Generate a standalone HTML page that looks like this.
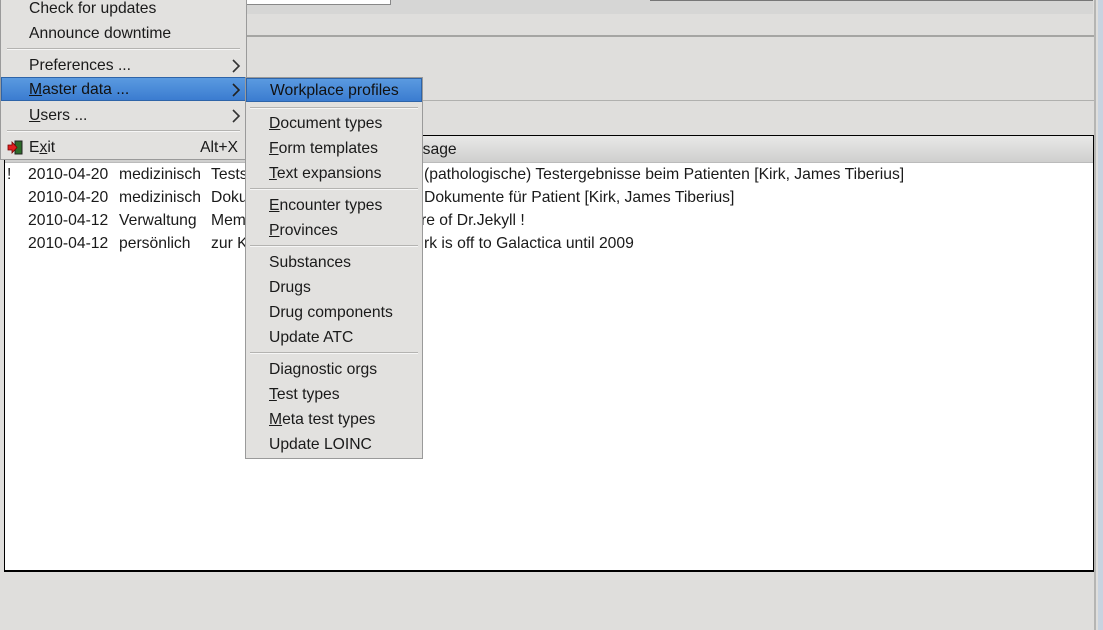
<!DOCTYPE html>
<html><head><meta charset="utf-8"><style>
*{margin:0;padding:0;box-sizing:border-box}
body{width:1103px;height:630px;overflow:hidden;background:#dfdedc;font-family:"Liberation Sans",sans-serif;font-size:15.7px;color:#1a1a1a;position:relative}
.a{position:absolute;white-space:nowrap}
u{text-decoration:underline}
.menu{position:absolute;background:#e2e1df;border:1px solid #9a9a9a}
.it{position:absolute;left:0;right:0;height:24px;line-height:25px}
.hl{background:linear-gradient(#5a9ae0,#3b7cd0);border:1px solid #2e64a8;color:#111;line-height:23px}
.sep{position:absolute;height:2px;border-top:1px solid #b4b3b1;border-bottom:1px solid #f6f6f6}
.arr{position:absolute;right:5px;top:6px}
</style></head><body>
<div class="a" style="left:0;top:0;width:1093px;height:14px;background:#d6d6d5"></div>
<div class="a" style="left:240px;top:0;width:151px;height:5px;background:#fff;border:1px solid #888;border-top:none"></div>
<div class="a" style="left:650px;top:0;width:443px;height:1px;background:#777"></div>
<div class="a" style="left:0;top:35px;width:1096px;height:2px;background:#a5a5a3"></div>
<div class="a" style="left:0;top:100px;width:1096px;height:1px;background:#b0b0ae"></div>
<div class="a" style="left:1094px;top:0;width:2px;height:630px;background:#b5b5b3"></div>
<div class="a" style="left:1098px;top:0;width:5px;height:630px;background:#c8d3e0"></div>
<div class="a" style="left:4px;top:135px;width:1090px;height:437px;background:#fff;border:1px solid #000;border-bottom:2px solid #000"></div>
<div class="a" style="left:5px;top:136px;width:1088px;height:27px;background:linear-gradient(#e8e8e7,#cfcfce);border-bottom:1px solid #bbb"></div>
<div class="a" style="left:393px;top:141px">Message</div>
<div class="a" style="left:7px;top:166px">!</div>
<div class="a" style="left:28px;top:166px">2010-04-20</div><div class="a" style="left:119px;top:166px">medizinisch</div><div class="a" style="left:211px;top:166px">Tests</div><div class="a" style="left:424px;top:166px">(pathologische) Testergebnisse beim Patienten [Kirk, James Tiberius]</div>
<div class="a" style="left:28px;top:189px">2010-04-20</div><div class="a" style="left:119px;top:189px">medizinisch</div><div class="a" style="left:211px;top:189px">Dokumente</div><div class="a" style="left:424px;top:189px">Dokumente für Patient [Kirk, James Tiberius]</div>
<div class="a" style="left:28px;top:212px">2010-04-12</div><div class="a" style="left:119px;top:212px">Verwaltung</div><div class="a" style="left:211px;top:212px">Memo</div><div class="a" style="left:421px;top:212px">re of Dr.Jekyll !</div>
<div class="a" style="left:28px;top:235px">2010-04-12</div><div class="a" style="left:119px;top:235px">persönlich</div><div class="a" style="left:211px;top:235px">zur Kenntnis</div><div class="a" style="left:424px;top:235px">rk is off to Galactica until 2009</div>

<div class="menu" style="left:0;top:-2px;width:247px;height:162px;border-top:none">
 <div class="it" style="top:-2px;padding-left:28px">Check for updates</div>
 <div class="it" style="top:23px;padding-left:28px">Announce downtime</div>
 <div class="sep" style="left:6px;right:6px;top:50px"></div>
 <div class="it" style="top:55px;padding-left:28px">Preferences ...<svg class="arr" width="9" height="14" viewBox="0 0 9 14"><path d="M1 1l6 6-6 6" fill="none" stroke="#333" stroke-width="1.6"/></svg></div>
 <div class="it hl" style="top:79px;padding-left:27px"><u>M</u>aster data ...<svg class="arr" style="top:5px;right:4px" width="9" height="14" viewBox="0 0 9 14"><path d="M1 1l6 6-6 6" fill="none" stroke="#222" stroke-width="1.6"/></svg></div>
 <div class="it" style="top:105px;padding-left:28px"><u>U</u>sers ...<svg class="arr" width="9" height="14" viewBox="0 0 9 14"><path d="M1 1l6 6-6 6" fill="none" stroke="#333" stroke-width="1.6"/></svg></div>
 <div class="sep" style="left:6px;right:6px;top:132px"></div>
 <div class="it" style="top:137px;padding-left:28px">E<u>x</u>it<span style="position:absolute;right:8px">Alt+X</span></div>
 <svg class="a" style="left:6px;top:142px" width="16" height="15" viewBox="0 0 16 15"><rect x="8" y="1" width="7" height="13" fill="#2d6b2a" stroke="#222"/><path d="M1 5h4V2l5 5.5-5 5.5V10H1z" fill="#e02020" stroke="#700" stroke-width=".8"/></svg>
</div>

<div class="menu" style="left:245px;top:77px;width:178px;height:382px">
 <div class="it hl" style="top:0;padding-left:23px">Workplace profiles</div>
 <div class="sep" style="left:4px;right:4px;top:29px"></div>
 <div class="it" style="top:33px;padding-left:23px"><u>D</u>ocument types</div>
 <div class="it" style="top:58px;padding-left:23px"><u>F</u>orm templates</div>
 <div class="it" style="top:83px;padding-left:23px"><u>T</u>ext expansions</div>
 <div class="sep" style="left:4px;right:4px;top:110px"></div>
 <div class="it" style="top:115px;padding-left:23px"><u>E</u>ncounter types</div>
 <div class="it" style="top:140px;padding-left:23px"><u>P</u>rovinces</div>
 <div class="sep" style="left:4px;right:4px;top:167px"></div>
 <div class="it" style="top:172px;padding-left:23px">Substances</div>
 <div class="it" style="top:197px;padding-left:23px">Drugs</div>
 <div class="it" style="top:222px;padding-left:23px">Drug components</div>
 <div class="it" style="top:247px;padding-left:23px">Update ATC</div>
 <div class="sep" style="left:4px;right:4px;top:274px"></div>
 <div class="it" style="top:279px;padding-left:23px">Diagnostic orgs</div>
 <div class="it" style="top:304px;padding-left:23px"><u>T</u>est types</div>
 <div class="it" style="top:329px;padding-left:23px"><u>M</u>eta test types</div>
 <div class="it" style="top:354px;padding-left:23px">Update LOINC</div>
</div>
</body></html>
